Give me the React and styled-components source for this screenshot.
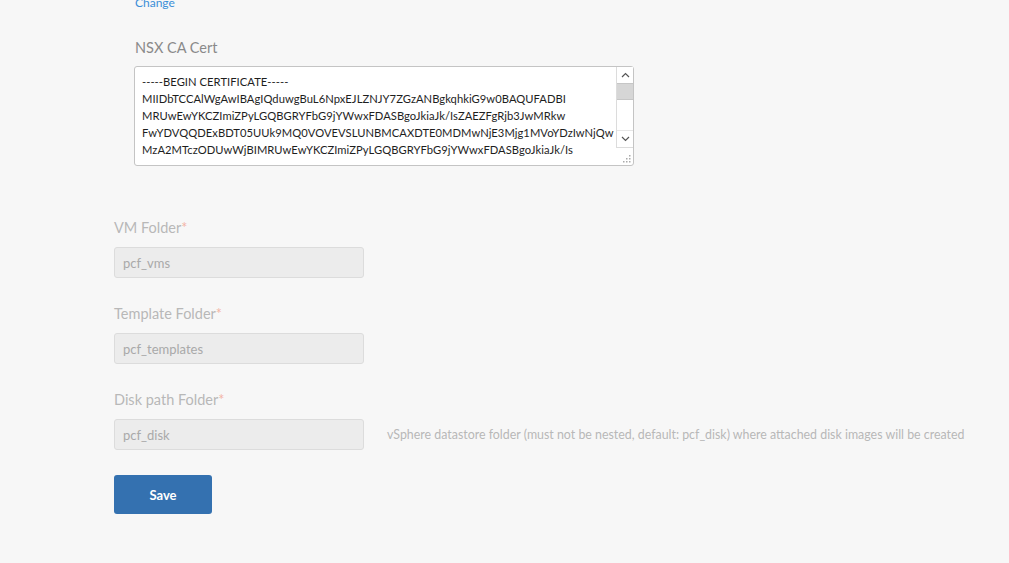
import React from "react";
import styled, { createGlobalStyle } from "styled-components";

const Global = createGlobalStyle`
  html, body { margin: 0; padding: 0; background: #f7f7f7; }
  body { font-family: Lato, "Noto Sans", sans-serif; overflow: hidden; }
`;

const Page = styled.div`
  width: 1009px;
  height: 563px;
  overflow: hidden;
  background: #f7f7f7;
  padding-left: 114px;
  box-sizing: border-box;
`;

const CertSection = styled.section`
  padding-left: 20px;
  display: flex;
  flex-direction: column;
  align-items: flex-start;
`;

const ChangeLink = styled.a`
  font-size: 12px;
  line-height: 14px;
  color: #3b8ed8;
  text-decoration: none;
  margin-top: -4px;
  margin-left: 1px;
`;

const Label = styled.label`
  display: block;
  font-size: 14.5px;
  line-height: 18px;
  color: ${(p) => (p.$disabled ? "#b8b8b8" : "#8a8a8a")};
`;

const Star = styled.span`
  color: #f3b5a6;
`;

const CertLabel = styled(Label)`
  margin-top: 29px;
  margin-left: 1px;
`;

const CertBox = styled.div`
  margin-top: 9px;
  width: 500px;
  height: 100px;
  box-sizing: border-box;
  border: 1px solid #c4c4c4;
  border-radius: 3px;
  background: #fff;
  display: flex;
  align-items: flex-start;
`;

const CertText = styled.textarea`
  flex: 1;
  height: 90px;
  box-sizing: border-box;
  border: none;
  outline: none;
  resize: none;
  overflow: hidden;
  white-space: pre;
  padding: 6px 0 0 7px;
  margin: 0;
  font-family: Lato, "Noto Sans", sans-serif;
  font-size: 11.2px;
  letter-spacing: 0.05px;
  line-height: 17px;
  color: #1e1e1e;
  background: transparent;
`;

const ScrollCol = styled.div`
  width: 17px;
  align-self: stretch;
  display: flex;
  flex-direction: column;
`;

const ScrollBar = styled.div`
  height: 81px;
  display: flex;
  flex-direction: column;
  border-left: 1px solid #dcdcdc;
  border-bottom: 1px solid #dcdcdc;
  box-sizing: border-box;
`;

const ArrowBtn = styled.div`
  height: 16px;
  display: flex;
  align-items: center;
  justify-content: center;
  background: #fff;
`;

const Thumb = styled.div`
  height: 17px;
  background: #d6d6d6;
  border-top: 1px solid #c6c6c6;
  border-bottom: 1px solid #c6c6c6;
  box-sizing: border-box;
`;

const Track = styled.div`
  flex: 1;
  background: #fff;
  border-bottom: 1px solid #e6e6e6;
`;

const Corner = styled.div`
  flex: 1;
  display: flex;
  align-items: flex-end;
  justify-content: flex-end;
  padding: 0 2px 2px 0;
`;

const Field = styled.div`
  display: flex;
  flex-direction: column;
  margin-top: ${(p) => p.$mt}px;
`;

const Row = styled.div`
  display: flex;
  align-items: center;
  margin-top: 10px;
`;

const Input = styled.input`
  width: 250px;
  height: 31px;
  box-sizing: border-box;
  border: 1px solid #dcdcdc;
  border-radius: 3px;
  background: #ececec;
  padding: 0 8px;
  font-family: Lato, "Noto Sans", sans-serif;
  font-size: 13px;
  color: #a9a9a9;
  outline: none;
`;

const Help = styled.span`
  margin-left: 23px;
  font-size: 12.4px;
  color: #b8b8b8;
  white-space: nowrap;
`;

const SaveButton = styled.button`
  margin-top: 25px;
  width: 98px;
  height: 39px;
  border: none;
  border-radius: 3px;
  background: #3471b0;
  color: #fff;
  font-family: Lato, "Noto Sans", sans-serif;
  font-size: 13px;
  font-weight: 700;
  cursor: pointer;
`;

const Chevron = ({ up }) => (
  <svg width="9" height="6" viewBox="0 0 9 6">
    <path
      d={up ? "M1 5 L4.5 1.5 L8 5" : "M1 1 L4.5 4.5 L8 1"}
      fill="none"
      stroke="#555"
      strokeWidth="1.2"
    />
  </svg>
);

const Grip = () => (
  <svg width="8" height="8" viewBox="0 0 8 8">
    {[
      [6, 0], [6, 3], [3, 3], [6, 6], [3, 6], [0, 6],
    ].map(([x, y], i) => (
      <rect key={i} x={x} y={y} width="1.5" height="1.5" fill="#aaa" />
    ))}
  </svg>
);

const cert = `-----BEGIN CERTIFICATE-----
MIIDbTCCAlWgAwIBAgIQduwgBuL6NpxEJLZNJY7ZGzANBgkqhkiG9w0BAQUFADBI
MRUwEwYKCZImiZPyLGQBGRYFbG9jYWwxFDASBgoJkiaJk/IsZAEZFgRjb3JwMRkw
FwYDVQQDExBDT05UUk9MQ0VOVEVSLUNBMCAXDTE0MDMwNjE3Mjg1MVoYDzIwNjQw
MzA2MTczODUwWjBIMRUwEwYKCZImiZPyLGQBGRYFbG9jYWwxFDASBgoJkiaJk/Is
ZAEZFgRjb3JwMRkwFwYDVQQDExBDT05UUk9MQ0VOVEVSLUNBMIIBIjANBgkqhkiG
-----END CERTIFICATE-----`;

const folders = [
  { label: "VM Folder", value: "pcf_vms", mt: 53 },
  { label: "Template Folder", value: "pcf_templates", mt: 27 },
  {
    label: "Disk path Folder",
    value: "pcf_disk",
    mt: 27,
    help: "vSphere datastore folder (must not be nested, default: pcf_disk) where attached disk images will be created",
  },
];

export default function App() {
  return (
    <>
      <Global />
      <Page>
        <CertSection>
          <ChangeLink href="#">Change</ChangeLink>
          <CertLabel>NSX CA Cert</CertLabel>
          <CertBox>
            <CertText defaultValue={cert} spellCheck={false} />
            <ScrollCol>
              <ScrollBar>
                <ArrowBtn><Chevron up /></ArrowBtn>
                <Thumb />
                <Track />
                <ArrowBtn><Chevron /></ArrowBtn>
              </ScrollBar>
              <Corner><Grip /></Corner>
            </ScrollCol>
          </CertBox>
        </CertSection>
        {folders.map((f) => (
          <Field key={f.label} $mt={f.mt}>
            <Label $disabled>
              {f.label}
              <Star>*</Star>
            </Label>
            <Row>
              <Input defaultValue={f.value} disabled />
              {f.help && <Help>{f.help}</Help>}
            </Row>
          </Field>
        ))}
        <SaveButton>Save</SaveButton>
      </Page>
    </>
  );
}
